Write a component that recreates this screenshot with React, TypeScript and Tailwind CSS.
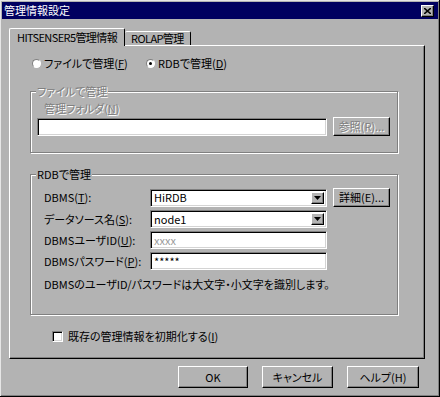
import clsx from "clsx";

const face = "bg-[#b3b3b3]";
const raised =
  "border border-t-white border-l-white border-r-black border-b-black shadow-[inset_-1px_-1px_0_#808080]";
const sunken =
  "border border-t-[#808080] border-l-[#808080] border-r-white border-b-white bg-white shadow-[inset_1px_1px_0_#000,inset_-1px_-1px_0_#d4d4d4]";
const etched = "text-[#808080] [text-shadow:1px_1px_0_#fff]";

function Button({
  label,
  className,
  disabled,
}: {
  label: string;
  className?: string;
  disabled?: boolean;
}) {
  return (
    <div
      className={clsx(
        "flex items-center justify-center",
        face,
        raised,
        disabled && etched,
        className,
      )}
    >
      {label}
    </div>
  );
}

function Combo({ value }: { value: string }) {
  return (
    <div className={clsx("flex h-[18px] w-[177px] items-center pl-[3px] pr-[2px]", sunken)}>
      <span className="flex-1">{value}</span>
      <div className={clsx("flex h-[12px] w-[13px] items-center justify-center", face, raised)}>
        <svg width="7" height="4" viewBox="0 0 7 4">
          <path d="M0 0h7L3.5 4z" fill="#000" />
        </svg>
      </div>
    </div>
  );
}

function Field({ value, muted }: { value: string; muted?: boolean }) {
  return (
    <div
      className={clsx(
        "flex h-[18px] w-[177px] items-center pl-[3px]",
        sunken,
        muted && "text-[#9a9a9a]",
      )}
    >
      {value}
    </div>
  );
}

function Radio({ checked }: { checked?: boolean }) {
  return (
    <div className="flex h-[9px] w-[9px] items-center justify-center rounded-full border border-t-[#808080] border-l-[#808080] border-r-white border-b-white bg-white">
      {checked ? <div className="h-[3px] w-[3px] rounded-full bg-black" /> : null}
    </div>
  );
}

function Group({
  title,
  disabled,
  className,
  children,
}: {
  title: string;
  disabled?: boolean;
  className?: string;
  children: React.ReactNode;
}) {
  return (
    <div
      className={clsx(
        "relative ml-[20px] w-[368px] border border-[#808080] shadow-[1px_1px_0_#fff,inset_1px_1px_0_#fff]",
        className,
      )}
    >
      <span
        className={clsx(
          "absolute -top-[8px] left-[5px] px-[1px] leading-[14px]",
          face,
          disabled && etched,
        )}
      >
        {title}
      </span>
      {children}
    </div>
  );
}

export default function App() {
  return (
    <div
      className={clsx(
        "flex h-[397px] w-[440px] flex-col px-[2px] pt-[2px] text-[11px] leading-none text-black [font-feature-settings:'palt']",
        face,
        "shadow-[inset_-1px_-1px_0_#000,inset_1px_1px_0_#e6e6e6,inset_-2px_-2px_0_#808080]",
      )}
      style={{ fontFamily: '"Noto Sans CJK JP", "Liberation Sans", sans-serif' }}
    >
      <div className="flex h-[17px] items-center justify-between bg-[#000060] pl-[2px] pr-[4px]">
        <span className="text-white">管理情報設定</span>
        <div className={clsx("flex h-[12px] w-[13px] items-center justify-center", face, raised)}>
          <svg width="7" height="6" viewBox="0 0 7 6">
            <path d="M0 0l7 6M7 0L0 6" stroke="#000" strokeWidth="1.6" />
          </svg>
        </div>
      </div>

      <div className="ml-[7px] mt-[9px]">
        <div className="flex items-end tracking-[-0.6px]">
          <div
            className={clsx(
              "relative z-10 -mb-px flex h-[18px] items-center rounded-t-[2px] border-l border-t border-r border-l-white border-t-white border-r-black px-[7px] pb-px",
              face,
            )}
          >
            HITSENSER5管理情報
          </div>
          <div className="flex h-[14px] items-center rounded-t-[2px] border-t border-r border-t-white border-r-black px-[6px]">
            ROLAP管理
          </div>
        </div>

        <div className="flex h-[314px] w-[416px] flex-col border border-t-white border-l-white border-r-black border-b-black shadow-[inset_-1px_-1px_0_#808080]">
          <div className="ml-[22px] mt-[10px] flex h-[14px] items-center">
            <div className="flex w-[114px] items-center gap-[3px]">
              <Radio />
              <span>ファイルで管理(<span className="underline">F</span>)</span>
            </div>
            <div className="flex items-center gap-[3px]">
              <Radio checked />
              <span>RDBで管理(<span className="underline">D</span>)</span>
            </div>
          </div>

          <Group title="ファイルで管理" disabled className="mt-[21px] h-[62px]">
            <div className={clsx("ml-[13px] mt-[11px]", etched)}>
              管理フォルダ(<span className="underline">N</span>)
            </div>
            <div className="ml-[6px] mt-[3px] flex items-center gap-[6px]">
              <div className={clsx("h-[18px] w-[290px]", sunken)} />
              <Button label="参照(R)..." disabled className="h-[19px] w-[57px]" />
            </div>
          </Group>

          <Group title="RDBで管理" className="mt-[21px] h-[141px]">
            <div className="ml-[13px] mt-[13px] flex flex-col gap-[3px]">
              <div className="flex items-center">
                <span className="w-[106px]">DBMS(<span className="underline">T</span>):</span>
                <Combo value="HiRDB" />
                <Button label="詳細(E)..." className="ml-[6px] h-[19px] w-[57px]" />
              </div>
              <div className="flex items-center">
                <span className="w-[106px]">データソース名(<span className="underline">S</span>):</span>
                <Combo value="node1" />
              </div>
              <div className="flex items-center">
                <span className="w-[106px]">DBMSユーザID(<span className="underline">U</span>):</span>
                <Field value="xxxx" muted />
              </div>
              <div className="flex items-center">
                <span className="w-[106px]">DBMSパスワード(<span className="underline">P</span>):</span>
                <Field value="*****" />
              </div>
              <div className="mt-[6px]">
                DBMSのユーザID/パスワードは大文字・小文字を識別します。
              </div>
            </div>
          </Group>

          <div className="ml-[42px] mt-[16px] flex items-center gap-[5px]">
            <div className={clsx("h-[11px] w-[11px]", sunken)} />
            <span>既存の管理情報を初期化する(<span className="underline">I</span>)</span>
          </div>
        </div>
      </div>

      <div className="ml-[176px] mt-[7px] flex gap-[14px]">
        <Button label="OK" className="h-[22px] w-[70px]" />
        <Button label="キャンセル" className="h-[22px] w-[71px]" />
        <Button label="ヘルプ(H)" className="h-[22px] w-[72px]" />
      </div>
    </div>
  );
}
